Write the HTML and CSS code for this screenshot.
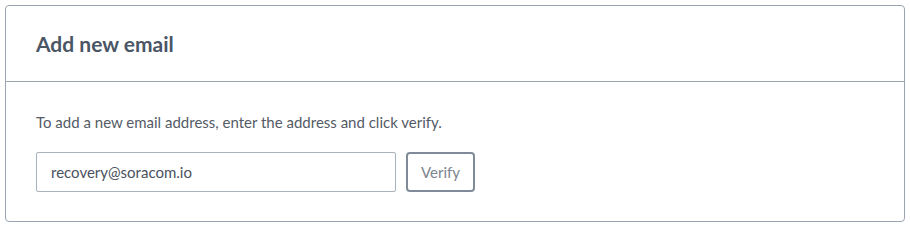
FILE: index.html
```html
<!DOCTYPE html>
<html lang="en">
<head>
  <meta charset="UTF-8">
  <title>Add new email</title>
  <link rel="stylesheet" href="styles.css">
</head>
<body>

<div class="panel">
  <div class="panel-head">
    <h2>Add new email</h2>
  </div>
  <div class="panel-body">
    <p class="hint">To add a new email address, enter the address and click verify.</p>
    <div class="form-row">
      <input class="email-input" type="text" value="recovery@soracom.io">
      <button class="verify-btn">Verify</button>
    </div>
  </div>
</div>

</body>
</html>
```

FILE: styles.css
```css
body {
  font-family: Lato, "Liberation Sans", sans-serif;
  background-color: #fff;
  color: #545b66;
  margin: 0;
  padding: 5px;
}
.panel {
  width: 900px;
  height: 217px;
  box-sizing: border-box;
  border: 1px solid #9aa5b1;
  border-radius: 4px;
}
.panel-head {
  height: 75px;
  padding: 0 30px;
  display: flex;
  align-items: center;
  border-bottom: 1px solid #9aa5b1;
}
.panel-head h2 {
  margin: 0;
  font-size: 21px;
  font-weight: bold;
  color: #4a5566;
}
.panel-body {
  padding: 31px 30px 0;
}
.hint {
  margin: 0 0 21px;
  font-size: 15px;
}
.form-row {
  display: flex;
  gap: 10px;
}
.email-input {
  width: 360px;
  height: 40px;
  box-sizing: border-box;
  border: 1px solid #a9b2bc;
  border-radius: 2px;
  padding: 0 14px;
  font-family: inherit;
  font-size: 15px;
  color: #4a5260;
}
.verify-btn {
  width: 69px;
  height: 40px;
  border: 2px solid #7f8b98;
  border-radius: 4px;
  background: #fff;
  color: #7c8590;
  font-family: inherit;
  font-size: 15px;
}
```
